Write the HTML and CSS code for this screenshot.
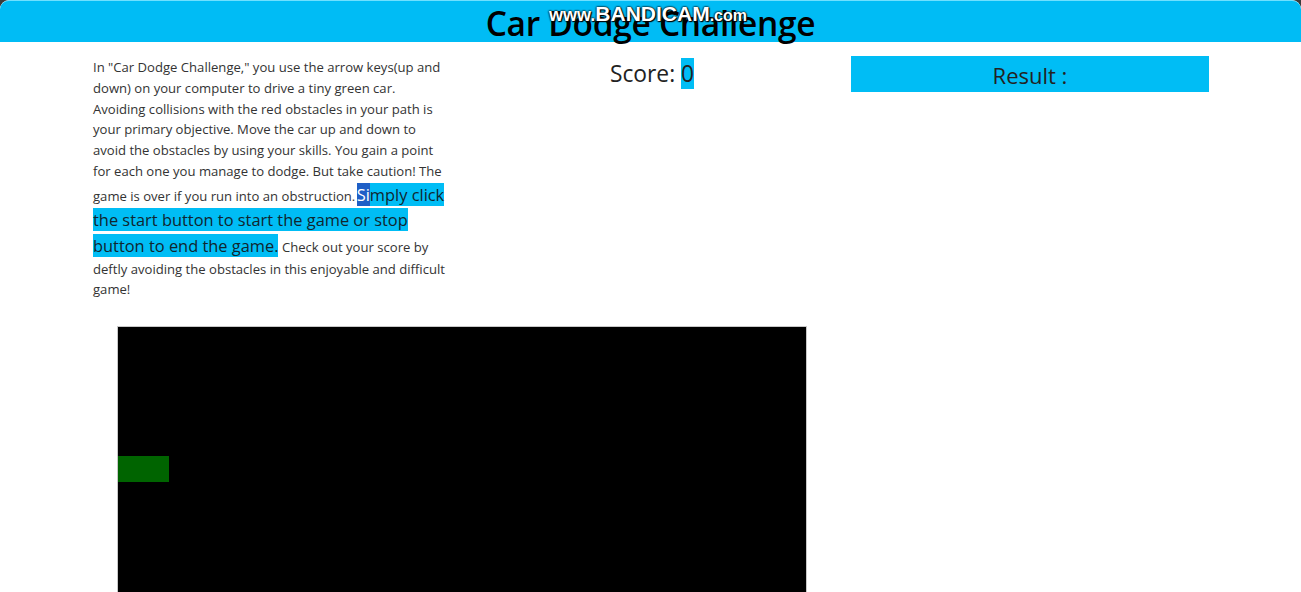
FILE: index.html
```html
<!DOCTYPE html>
<html lang="en">
<head>
<meta charset="utf-8">
<title>Car Dodge Challenge</title>
<link rel="stylesheet" href="styles.css">
</head>
<body>
<div class="window">
  <header class="topbar">
    <h1 class="title">Car Dodge Challenge</h1>
    <div class="watermark"><span class="wm-www">www.</span>BANDICAM<span class="wm-com">.com</span></div>
  </header>
  <main class="content">
    <p class="intro">In "Car Dodge Challenge," you use the arrow keys(up and down) on your computer to drive a tiny green car.<br>Avoiding collisions with the red obstacles in your path is your primary objective. Move the car up and down to avoid the obstacles by using your skills. You gain a point for each one you manage to dodge. But take caution! The game is over if you run into an obstruction.<span class="gap"> </span><span class="hl"><span class="sel">Si</span>mply click the start button to start the game or stop button to end the game.</span> Check out your score by deftly avoiding the obstacles in this enjoyable and difficult game!</p>
    <div class="score">Score: <span class="score-val">0</span></div>
    <div class="result">Result :</div>
  </main>
  <section class="game">
    <div class="board">
      <div class="car"></div>
    </div>
  </section>
</div>
</body>
</html>
```

FILE: styles.css
```css
html, body {
  margin: 0;
  padding: 0;
  background: #3b3b3b;
}
body {
  font-family: "Open Sans", "Noto Sans", sans-serif;
  color: #333;
}
.window {
  background: #fff;
  border-radius: 9px 9px 0 0;
  height: 592px;
  overflow: hidden;
}
.topbar {
  position: relative;
  background: #00bcf5;
  height: 42px;
  border-top: 1px solid #6fe0ff;
  box-sizing: border-box;
  border-radius: 9px 9px 0 0;
}
.title {
  margin: 0;
  text-align: center;
  font-size: 33.5px;
  font-weight: 600;
  line-height: 44px;
  color: #000;
  letter-spacing: -0.3px;
}
.watermark {
  position: absolute;
  left: 549px;
  top: 1px;
  font-family: "Liberation Sans", Arial, sans-serif;
  font-weight: bold;
  font-size: 21px;
  line-height: 24px;
  color: #fff;
  text-shadow: 0 0 2px #000, 0 0 2px #000, 1px 1px 1px #000;
}
.wm-www {
  font-size: 18px;
}
.wm-com {
  font-size: 16px;
}
.content {
  display: grid;
  grid-template-columns: 358px 1fr 358px;
  padding: 0 92px 0 93px;
  align-items: start;
}
.intro {
  margin: 15px 0 0;
  font-size: 13.1px;
  line-height: 20.8px;
  color: #333;
}
.gap {
  letter-spacing: -2px;
}
.hl {
  background: #00bdf5;
  font-size: 16.4px;
  line-height: 25.6px;
  color: #10262f;
}
.sel {
  background: #1e5fc6;
  color: #fff;
}
.score {
  text-align: center;
  margin-top: 15px;
  padding-left: 2px;
  font-size: 22.8px;
  line-height: 33px;
  color: #222;
}
.score-val {
  background: #00bdf5;
}
.result {
  margin-top: 14px;
  height: 36px;
  background: #00bdf5;
  text-align: center;
  font-size: 22px;
  line-height: 38px;
  color: #222;
}
.game {
  padding: 26px 0 0 117px;
}
.board {
  position: relative;
  width: 690px;
  height: 400px;
  background: #000;
  border: 1px solid #c8c8c8;
  border-bottom: 0;
  box-sizing: border-box;
}
.car {
  position: absolute;
  left: 0;
  top: 129px;
  width: 51px;
  height: 26px;
  background: #006400;
}
```
